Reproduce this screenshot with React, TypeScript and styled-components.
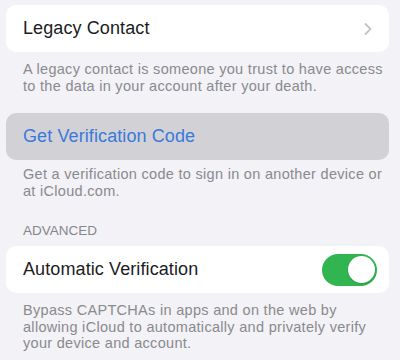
import React, { FC, ReactNode } from "react";
import styled, { createGlobalStyle } from "styled-components";

const GlobalStyle = createGlobalStyle`
  html, body {
    margin: 0;
    padding: 0;
    background: #f2f2f7;
  }
  body {
    font-family: "Liberation Sans", Arial, sans-serif;
    -webkit-font-smoothing: antialiased;
  }
`;

const Page = styled.div`
  width: 400px;
  height: 360px;
  box-sizing: border-box;
  padding: 5px 11px 0 6px;
  background: #f2f2f7;
  overflow: hidden;
`;

const Card = styled.div<{ $pressed?: boolean }>`
  display: flex;
  align-items: center;
  justify-content: space-between;
  height: 47px;
  box-sizing: border-box;
  padding: 0 12px 0 17px;
  border-radius: 10px;
  background: ${(p) => (p.$pressed ? "#d2d2d6" : "#ffffff")};
`;

const Label = styled.span<{ $link?: boolean }>`
  font-size: 18px;
  color: ${(p) => (p.$link ? "#3a79da" : "#1c1c1e")};
  letter-spacing: 0.1px;
`;

const Footer = styled.p<{ $top?: number; $bottom?: number }>`
  margin: ${(p) => p.$top ?? 9}px 0 ${(p) => p.$bottom ?? 0}px;
  padding: 0 0 0 17px;
  font-size: 14.5px;
  line-height: 16.5px;
  letter-spacing: 0.3px;
  white-space: nowrap;
  color: #8a8a8e;
`;

const SectionHeader = styled.div`
  margin: 0 0 7px;
  padding: 0 17px;
  font-size: 13.5px;
  line-height: 16px;
  color: #86868b;
  text-transform: uppercase;
`;

const Chevron = () => (
  <svg width="10" height="14" viewBox="0 0 10 14" style={{ marginRight: 4 }}>
    <path
      d="M2.5 2 L7.5 7 L2.5 12"
      fill="none"
      stroke="#c4c4c8"
      strokeWidth="1.8"
      strokeLinecap="round"
      strokeLinejoin="round"
    />
  </svg>
);

const Track = styled.div<{ $on: boolean }>`
  position: relative;
  width: 55px;
  height: 32px;
  border-radius: 16px;
  background: ${(p) => (p.$on ? "#30b551" : "#e5e5ea")};
  flex-shrink: 0;
`;

const Knob = styled.div<{ $on: boolean }>`
  position: absolute;
  top: 2.5px;
  left: ${(p) => (p.$on ? "25.5px" : "2.5px")};
  width: 27px;
  height: 27px;
  border-radius: 50%;
  background: #ffffff;
  box-shadow: 0 1px 2px rgba(0, 0, 0, 0.15);
`;

const Toggle: FC<{ on: boolean }> = ({ on }) => (
  <Track $on={on}>
    <Knob $on={on} />
  </Track>
);

const Row: FC<{ children: ReactNode; pressed?: boolean }> = ({ children, pressed }) => (
  <Card $pressed={pressed}>{children}</Card>
);

export default function App() {
  return (
    <>
      <GlobalStyle />
      <Page>
        <Row>
          <Label>Legacy Contact</Label>
          <Chevron />
        </Row>
        <Footer $bottom={19}>
          A legacy contact is someone you trust to have access
          <br />
          to the data in your account after your death.
        </Footer>

        <Row pressed>
          <Label $link>Get Verification Code</Label>
        </Row>
        <Footer $top={6} $bottom={24}>
          Get a verification code to sign in on another device or
          <br />
          at iCloud.com.
        </Footer>

        <SectionHeader>Advanced</SectionHeader>
        <Row>
          <Label>Automatic Verification</Label>
          <Toggle on />
        </Row>
        <Footer $top={9}>
          Bypass CAPTCHAs in apps and on the web by
          <br />
          allowing iCloud to automatically and privately verify
          <br />
          your device and account.
        </Footer>
      </Page>
    </>
  );
}
